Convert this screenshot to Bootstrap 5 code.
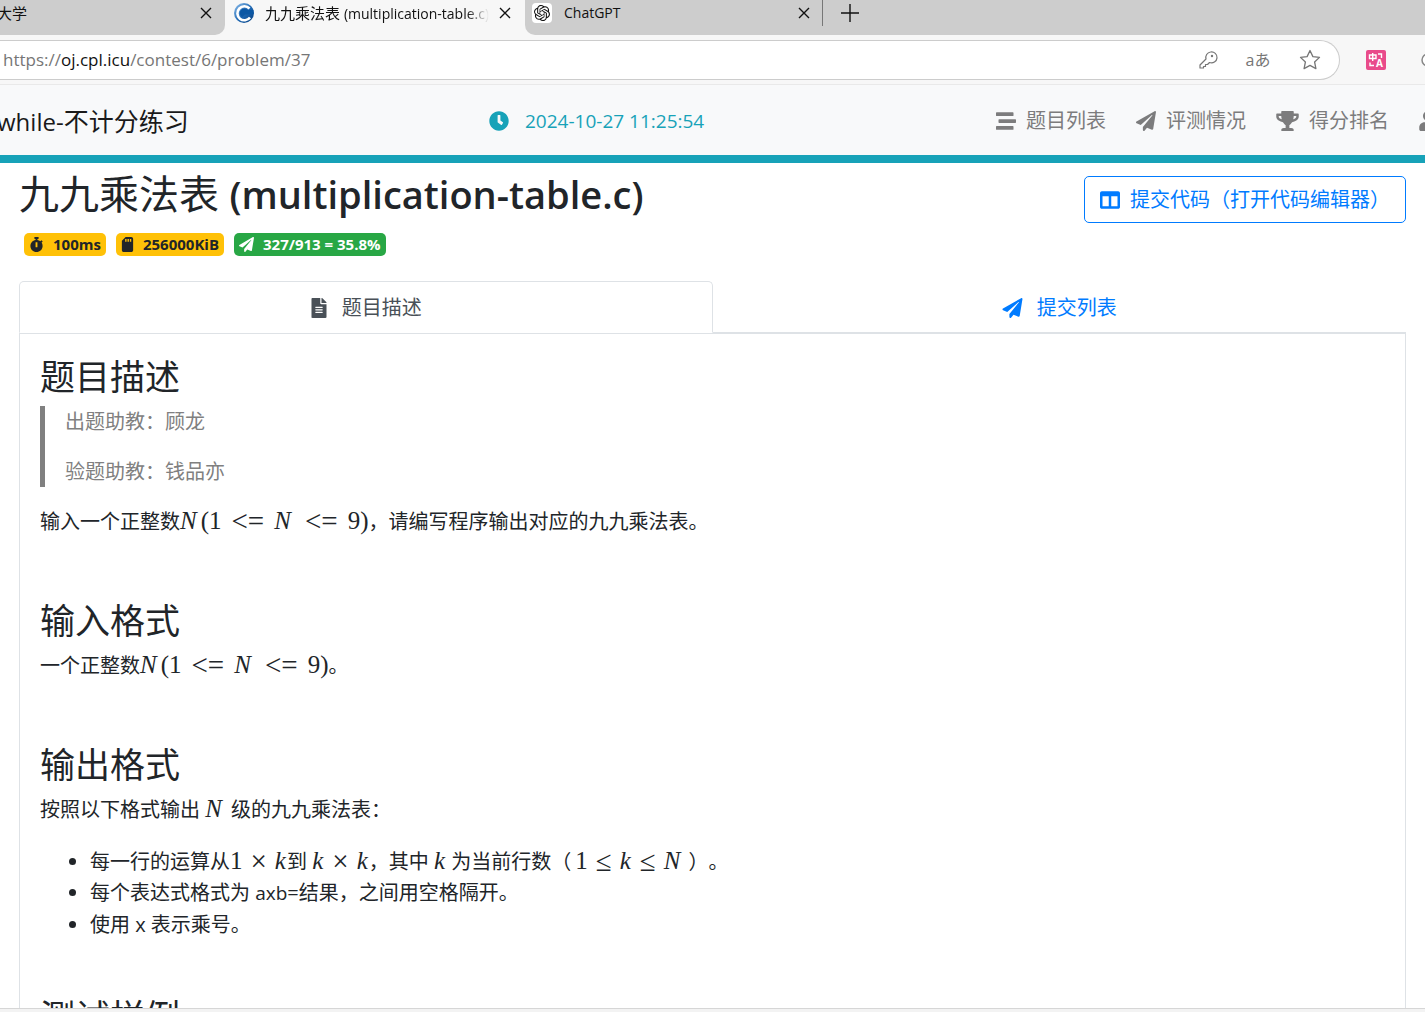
<!DOCTYPE html>
<html lang="zh-CN">
<head>
<meta charset="utf-8">
<meta name="viewport" content="width=device-width, initial-scale=1">
<title>九九乘法表 (multiplication-table.c)</title>
<link href="https://cdn.jsdelivr.net/npm/bootstrap@5.3.0/dist/css/bootstrap.min.css" rel="stylesheet">
<style>
:root { --ui: "Open Sans", "Noto Sans CJK SC", sans-serif; --teal: #17a2b8; --blue: #007bff; --line: #dee2e6; }
body { font-family: var(--ui); font-size: 20px; line-height: 30px; color: #212529; }
svg { display: block; flex: none; fill: currentColor; }
.latin { font-size: 19px; }
/* browser chrome */
.tab-strip { height: 35px; background: #f7f7f7; font-size: 15px; line-height: 20px; color: #111; }
.win-tab { background: #cdcdcd; padding-bottom: 9px; }
.win-tab.first { width: 225px; border-bottom-right-radius: 10px; padding-right: 13px; }
.win-tab.current { width: 300px; background: #f7f7f7; padding: 0 14px 9px 8px; }
.win-tab.rest { border-bottom-left-radius: 10px; padding-left: 7px; }
.win-tab .latin { font-size: 14px; }
.tab-title { overflow: hidden; white-space: nowrap; min-width: 0; }
.current .tab-title { margin: 0 10px; mask-image: linear-gradient(90deg, #000 90%, transparent); -webkit-mask-image: linear-gradient(90deg, #000 90%, transparent); }
.cut-left { margin-left: -3px; }
.plain { background: none; border: 0; padding: 0; color: inherit; }
.gpt-name { width: 230px; }
.tab-rule { width: 1px; height: 26px; background: #777; margin: 0 18px 0 12px; }
.toolbar-row { height: 50px; background: #f7f7f7; border-bottom: 1px solid #e9e9e9; padding: 5px 0 4px; }
.url-box { width: 94%; height: 40px; border: 1px solid #ccc; border-left: 0; border-radius: 0 20px 20px 0; background: #fff; color: #767676; padding: 0 18px 0 3px; font-size: 17px; }
.url-box b { font-weight: 400; color: #111; }
.lang-glyph { font-size: 16px; line-height: 20px; }
.ext-btn { margin-left: 26px; }
/* contest navbar */
.contest-bar { height: 78px; padding-top: 2px; background: #f8f9fa; border-bottom: 8px solid var(--teal); overflow: hidden; }
.contest-name { width: 489px; font-size: 25px; color: #1a1a1a; white-space: nowrap; }
.contest-name .latin { font-size: 24px; }
.clock-now { color: var(--teal); gap: 16px; }
.contest-links { gap: 30px; }
.contest-links a { color: #7c7c7d; text-decoration: none; display: flex; align-items: center; gap: 10px; white-space: nowrap; }
.contest-links .edge { width: 6px; overflow: hidden; }
/* problem page */
.problem { padding: 7px 19px 0; }
.problem h1 { font-size: 40px; line-height: 48px; font-weight: 400; margin: 0 0 15px; }
.problem h1 .latin { font-size: 38px; font-weight: 600; }
.pill-row { gap: 10px; padding-left: 5px; }
.pill { display: flex; align-items: center; gap: 9px; height: 23px; padding: 0 5px; border-radius: 5px; font-size: 15px; line-height: 23px; font-weight: 700; }
.pill.limit { background: #ffc107; color: #212529; }
.pill.rate { background: #28a745; color: #fff; }
.btn-code { --bs-btn-color: var(--blue); --bs-btn-border-color: var(--blue); font-size: 20px; line-height: 31px; padding: 7px 15px; gap: 10px; border-radius: 5px; margin-top: 6px; white-space: nowrap; }
.problem .nav-tabs { margin-top: 25px; --bs-nav-tabs-border-color: var(--line); }
.problem .nav-link { display: flex; justify-content: center; align-items: center; gap: 14px; width: 100%; font-size: 20px; line-height: 30px; padding: 11px 20px 9px; color: var(--blue); border-radius: 5px 5px 0 0; }
.problem .nav-link.active { color: #495057; }
.statement { border: 1px solid var(--line); padding: 22px 20px; }
.statement section { display: flow-root; margin-bottom: 44px; }
.statement h3 { font-size: 35px; line-height: 42px; font-weight: 400; margin: 0 0 8px; }
.statement p { padding-top: 1px; margin: 0 0 19px; }
.statement blockquote { border-left: 5px solid gray; padding-left: 20px; color: gray; margin: 0 0 19px; font-size: 20px; }
.statement blockquote p:last-child { margin: 0; }
.statement p + p { margin-bottom: 19px; }
.statement ul { margin: 21px 0 12px; padding-left: 50px; line-height: 31px; text-spacing-trim: space-all; }
.tex { font-family: "Liberation Serif", serif; font-size: 25px; line-height: 25px; white-space: nowrap; }
.tex i { padding-right: 1px; }
.tex .cap { padding-right: 4px; }
.tex .rel { font-size: 29px; line-height: 20px; vertical-align: -2px; margin: 0 8px; }
.tex .le { margin: 0 10px; }
.win-edge { height: 4px; background: #f3f3f3; border-top: 1px solid #d6d6d6; }
</style>
<script src="https://cdn.jsdelivr.net/npm/bootstrap@5.3.0/dist/js/bootstrap.bundle.min.js"></script>
</head>
<body class="d-flex flex-column vh-100 overflow-hidden">
<svg class="d-none" aria-hidden="true">
  <symbol id="i-plane" viewBox="0 0 512 512"><path d="M476 3.2L12.5 270.6c-18.1 10.4-15.8 35.6 2.2 43.2L121 358.4l287.3-253.2c5.5-4.9 13.3 2.6 8.6 8.3L176 407v80.5c0 23.6 28.5 32.900 42.500 15.800L282 426l124.600 52.200c14.200 6 30.400-2.900 33-18.200l72-432C515 7.800 493.300-6.800 476 3.200z"/></symbol>
  <symbol id="i-x" viewBox="0 0 12 12"><path d="M1 1l10 10M11 1L1 11" fill="none" stroke="currentColor" stroke-width="1.4"/></symbol>
</svg>

<header class="flex-shrink-0">
  <div class="tab-strip d-flex">
    <div class="win-tab first d-flex align-items-center justify-content-between">
      <span class="tab-title cut-left">大学</span>
      <button class="plain" aria-label="关闭标签页"><svg width="12" height="12"><use href="#i-x"/></svg></button>
    </div>
    <div class="win-tab current d-flex align-items-center">
      <svg width="22" height="22" viewBox="0 0 22 22"><defs><linearGradient id="g" x1="0" y1="0" x2="1" y2="1"><stop offset="0" stop-color="#8fc0ee"/><stop offset=".55" stop-color="#1c65b0"/><stop offset="1" stop-color="#063f80"/></linearGradient></defs><circle cx="11" cy="11" r="10" fill="url(#g)"/><path d="M16.500 6.500A7 7 0 1 0 17 15.500" fill="none" stroke="#fff" stroke-width="2.600"/><path d="M14.500 8A4.500 4.500 0 1 0 9 15L12 12.500l8.500-.5V8z" fill="#0b57a4"/></svg>
      <span class="tab-title flex-grow-1">九九乘法表 <span class="latin">(multiplication-table.c)</span></span>
      <button class="plain" aria-label="关闭标签页"><svg width="12" height="12"><use href="#i-x"/></svg></button>
    </div>
    <div class="win-tab rest flex-grow-1 d-flex align-items-center">
      <svg width="20" height="20" viewBox="-3 -3 30 30"><rect x="-3" y="-3" width="30" height="30" rx="6" fill="#fff"/><path d="M22.282 9.821a5.985 5.985 0 0 0-.516-4.911 6.046 6.046 0 0 0-6.51-2.9A6.065 6.065 0 0 0 4.981 4.182a5.985 5.985 0 0 0-3.998 2.9 6.046 6.046 0 0 0 .743 7.097 5.98 5.98 0 0 0 .511 4.911 6.051 6.051 0 0 0 6.515 2.9A5.985 5.985 0 0 0 13.26 24a6.056 6.056 0 0 0 5.772-4.206 5.989 5.989 0 0 0 3.998-2.9 6.056 6.056 0 0 0-.748-7.073zm-9.022 12.608a4.476 4.476 0 0 1-2.876-1.041l.142-.08 4.778-2.758a.795.795 0 0 0 .393-.681v-6.737l2.02 1.169a.071.071 0 0 1 .038.052v5.582a4.504 4.504 0 0 1-4.495 4.494zm-9.661-4.125a4.471 4.471 0 0 1-.534-3.014l.142.085 4.783 2.758a.771.771 0 0 0 .781 0l5.843-3.368v2.332a.08.08 0 0 1-.033.062L9.74 19.95a4.499 4.499 0 0 1-6.141-1.646zM2.341 7.896a4.485 4.485 0 0 1 2.366-1.973V11.6a.766.766 0 0 0 .388.677l5.814 3.354-2.02 1.169a.076.076 0 0 1-.071 0l-4.83-2.787A4.504 4.504 0 0 1 2.341 7.872zm16.596 3.856L13.104 8.364 15.119 7.2a.076.076 0 0 1 .071 0l4.83 2.791a4.494 4.494 0 0 1-.676 8.105v-5.678a.79.79 0 0 0-.407-.667zm2.011-3.023l-.142-.085-4.774-2.782a.776.776 0 0 0-.785 0L9.409 9.23V6.897a.066.066 0 0 1 .028-.061l4.83-2.787a4.499 4.499 0 0 1 6.681 4.66zM8.307 12.863l-2.02-1.164a.08.08 0 0 1-.038-.057V6.074a4.499 4.499 0 0 1 7.376-3.453l-.142.08L8.704 5.459a.795.795 0 0 0-.393.681zm1.097-2.365l2.602-1.5 2.607 1.5v2.999l-2.597 1.5-2.607-1.5z"/></svg>
      <span class="latin gpt-name ms-2 ps-1 me-1">ChatGPT</span>
      <button class="plain ms-1" aria-label="关闭标签页"><svg width="12" height="12"><use href="#i-x"/></svg></button>
      <span class="tab-rule"></span>
      <button class="plain" aria-label="新建标签页"><svg width="18" height="18" viewBox="0 0 18 18"><path d="M9 0v18M0 9h18" stroke="currentColor" stroke-width="1.400"/></svg></button>
    </div>
  </div>
  <div class="toolbar-row d-flex align-items-center overflow-hidden">
    <div class="url-box d-flex align-items-center flex-shrink-0">
      <span class="me-auto">https://<b>oj.cpl.icu</b>/contest/6/problem/37</span>
      <button class="plain" aria-label="密码"><svg width="20" height="20" viewBox="0 0 20 20"><path fill="none" stroke="currentColor" stroke-width="1.200" stroke-linejoin="round" d="M12.500 2a5.500 5.500 0 1 1-1 10.500L9.500 14.500H7.500V16.500H5.500V18H2V15L8 9A5.500 5.500 0 0 1 12.500 2z"/><circle cx="14" cy="6" r="1.200"/></svg></button>
      <button class="plain lang-glyph mx-4 px-1" aria-label="翻译">aあ</button>
      <button class="plain" aria-label="收藏"><svg width="22" height="22" viewBox="0 0 22 22"><path fill="none" stroke="currentColor" stroke-width="1.300" stroke-linejoin="round" d="M11 1.500l2.900 6.100 6.600.8-4.900 4.600 1.300 6.600-5.900-3.200-5.900 3.200 1.300-6.600L1.500 8.400l6.600-.8z"/></svg></button>
    </div>
    <button class="plain ext-btn" aria-label="翻译扩展"><svg width="20" height="20" viewBox="0 0 20 20"><rect width="20" height="20" rx="2" fill="#e94b8b"/><g fill="none" stroke="#fff" stroke-width="1.400"><path d="M3.500 5h6.500v3.500H3.500zM6.700 3v8M12 4h3.500v4M4 12.500v3h4"/></g><text x="10" y="17" font-size="10" font-weight="700" fill="#fff">A</text></svg></button>
    <svg class="ms-auto" width="4" height="20" viewBox="0 0 4 20"><circle cx="7" cy="10" r="6" fill="#fff" stroke="#888" stroke-width="1.500"/></svg>
  </div>
</header>

<div class="flex-grow-1 overflow-hidden">
  <nav class="contest-bar d-flex align-items-center">
    <div class="contest-name flex-shrink-0"><span class="cut-left latin">while-</span>不计分练习</div>
    <div class="clock-now d-flex align-items-center"><svg width="20" height="20" viewBox="0 0 512 512"><path d="M256 8C119 8 8 119 8 256s111 248 248 248 248-111 248-248S393 8 256 8zm57 350l-88-64c-3-2-5-6-5-10V116c0-7 5-12 12-12h48c7 0 12 5 12 12v128l64 46c5 4 6 11 2 17l-28 48c-4 5-12 6-17 3z"/></svg><span class="latin">2024-10-27 11:25:54</span></div>
    <div class="contest-links d-flex align-items-center ms-auto">
      <a href="#"><svg width="20" height="20" viewBox="0 0 512 512"><path d="M16 128h416c8.840 0 16-7.160 16-16V48c0-8.840-7.160-16-16-16H16C7.160 32 0 39.160 0 48v64c0 8.840 7.160 16 16 16zm480 80H80c-8.840 0-16 7.160-16 16v64c0 8.840 7.160 16 16 16h416c8.840 0 16-7.160 16-16v-64c0-8.840-7.160-16-16-16zm-64 176H16c-8.840 0-16 7.160-16 16v64c0 8.840 7.160 16 16 16h416c8.840 0 16-7.160 16-16v-64c0-8.840-7.160-16-16-16z"/></svg>题目列表</a>
      <a href="#"><svg width="20" height="20"><use href="#i-plane"/></svg>评测情况</a>
      <a href="#"><svg width="23" height="20" viewBox="0 0 576 512"><path d="M552 64H448V24c0-13.300-10.700-24-24-24H152c-13.300 0-24 10.700-24 24v40H24C10.700 64 0 74.700 0 88v56c0 35.700 22.500 72.400 61.900 100.700 31.500 22.700 69.800 37.100 110 41.700C203.300 338.500 240 360 240 360v72h-48c-35.300 0-64 20.700-64 56v12c0 6.600 5.400 12 12 12h296c6.600 0 12-5.400 12-12v-12c0-35.300-28.700-56-64-56h-48v-72s36.700-21.500 68.100-73.600c40.300-4.600 78.600-19 110-41.700 39.300-28.300 61.900-65 61.900-100.700V88c0-13.300-10.700-24-24-24zM99.300 192.800C74.900 175.200 64 155.600 64 144v-16h64.200c1 32.600 5.800 61.200 12.800 86.200-15.100-5.200-29.200-12.400-41.700-21.400zM512 144c0 16.100-17.700 36.100-35.300 48.800-12.500 9-26.700 16.200-41.800 21.400 7-25 11.800-53.600 12.800-86.200H512v16z"/></svg>得分排名</a>
      <a href="#" class="edge" aria-label="用户"><svg width="18" height="20" viewBox="0 0 448 512"><path d="M224 256c70.700 0 128-57.300 128-128S294.700 0 224 0 96 57.300 96 128s57.300 128 128 128zm89.600 32h-16.700c-22.200 10.200-46.900 16-72.900 16s-50.600-5.800-72.900-16h-16.700C60.200 288 0 348.200 0 422.400V464c0 26.500 21.500 48 48 48h352c26.500 0 48-21.500 48-48v-41.600c0-74.200-60.200-134.400-134.400-134.400z"/></svg></a>
    </div>
  </nav>

  <main class="problem">
    <div class="d-flex justify-content-between align-items-start">
      <div>
        <h1>九九乘法表 <span class="latin">(multiplication-table.c)</span></h1>
        <div class="pill-row d-flex">
          <span class="pill limit"><svg width="15" height="15" viewBox="0 0 448 512"><path d="M432 304c0 114.900-93.100 208-208 208S16 418.900 16 304c0-104 76.300-190.200 176-205.500V64h-28c-6.600 0-12-5.400-12-12V12c0-6.600 5.400-12 12-12h120c6.600 0 12 5.400 12 12v40c0 6.600-5.400 12-12 12h-28v34.500c37.500 5.800 71.700 21.600 99.700 44.600l27.500-27.500c4.700-4.700 12.300-4.700 17 0l28.300 28.300c4.700 4.700 4.700 12.300 0 17l-30 30C419.700 223.300 432 262.200 432 304zm-176 36V188.500c0-6.600-5.400-12-12-12h-40c-6.600 0-12 5.400-12 12V340c0 6.600 5.400 12 12 12h40c6.600 0 12-5.400 12-12z"/></svg>100ms</span>
          <span class="pill limit"><svg width="13" height="15" viewBox="0 0 384 512"><path d="M320 0H128L0 128v320c0 35.300 28.700 64 64 64h256c35.300 0 64-28.700 64-64V64c0-35.300-28.700-64-64-64zM160 160h-48V64h48v96zm80 0h-48V64h48v96zm80 0h-48V64h48v96z"/></svg>256000KiB</span>
          <span class="pill rate"><svg width="15" height="15"><use href="#i-plane"/></svg>327/913 = 35.8%</span>
        </div>
      </div>
      <button class="btn btn-outline-primary btn-code d-flex align-items-center"><svg width="20" height="20" viewBox="0 0 512 512"><path d="M464 32H48C21.490 32 0 53.490 0 80v352c0 26.510 21.490 48 48 48h416c26.510 0 48-21.490 48-48V80c0-26.510-21.490-48-48-48zM224 416H64V160h160v256zm224 0H288V160h160v256z"/></svg>提交代码（打开代码编辑器）</button>
    </div>

    <ul class="nav nav-tabs nav-fill">
      <li class="nav-item w-50"><a class="nav-link active" href="#"><svg width="18" height="20" viewBox="0 0 384 512"><path d="M224 136V0H24C10.700 0 0 10.700 0 24v464c0 13.300 10.700 24 24 24h336c13.300 0 24-10.700 24-24V160H248c-13.200 0-24-10.800-24-24zm64 236c0 6.600-5.400 12-12 12H108c-6.600 0-12-5.400-12-12v-8c0-6.600 5.400-12 12-12h168c6.600 0 12 5.400 12 12v8zm0-64c0 6.600-5.400 12-12 12H108c-6.600 0-12-5.400-12-12v-8c0-6.600 5.400-12 12-12h168c6.600 0 12 5.400 12 12v8zm0-72v8c0 6.600-5.400 12-12 12H108c-6.600 0-12-5.400-12-12v-8c0-6.600 5.400-12 12-12h168c6.600 0 12 5.400 12 12zm96-114.100v6.100H256V0h6.100c6.400 0 12.500 2.500 17 7l97.900 98c4.500 4.500 7 10.600 7 16.900z"/></svg>题目描述</a></li>
      <li class="nav-item w-50"><a class="nav-link" href="#"><svg width="21" height="20"><use href="#i-plane"/></svg>提交列表</a></li>
    </ul>

    <div class="statement">
      <section>
        <h3>题目描述</h3>
        <blockquote><p>出题助教：顾龙</p><p>验题助教：钱品亦</p></blockquote>
        <p>输入一个正整数<span class="tex"><i class="cap">N</i>(1<span class="rel le">&lt;=</span><i class="cap">N</i><span class="rel le">&lt;=</span>9)</span>，请编写程序输出对应的九九乘法表。</p>
      </section>
      <section>
        <h3>输入格式</h3>
        <p>一个正整数<span class="tex"><i class="cap">N</i>(1<span class="rel le">&lt;=</span><i class="cap">N</i><span class="rel le">&lt;=</span>9)</span>。</p>
      </section>
      <section>
        <h3>输出格式</h3>
        <p>按照以下格式输出 <span class="tex"><i class="cap">N</i></span> 级的九九乘法表：</p>
        <ul>
          <li>每一行的运算从<span class="tex">1<span class="rel">×</span><i>k</i></span>到 <span class="tex"><i>k</i><span class="rel">×</span><i>k</i></span>，其中 <span class="tex"><i>k</i></span> 为当前行数（<span class="tex px-1">1<span class="rel">≤</span><i>k</i><span class="rel">≤</span><i class="cap">N</i></span>）。</li>
          <li>每个表达式格式为 <span class="latin">axb</span>=结果，之间用空格隔开。</li>
          <li>使用 x 表示乘号。</li>
        </ul>
      </section>
      <section>
        <h3>测试样例</h3>
      </section>
    </div>
  </main>
</div>
<div class="win-edge flex-shrink-0"></div>
</body>
</html>
